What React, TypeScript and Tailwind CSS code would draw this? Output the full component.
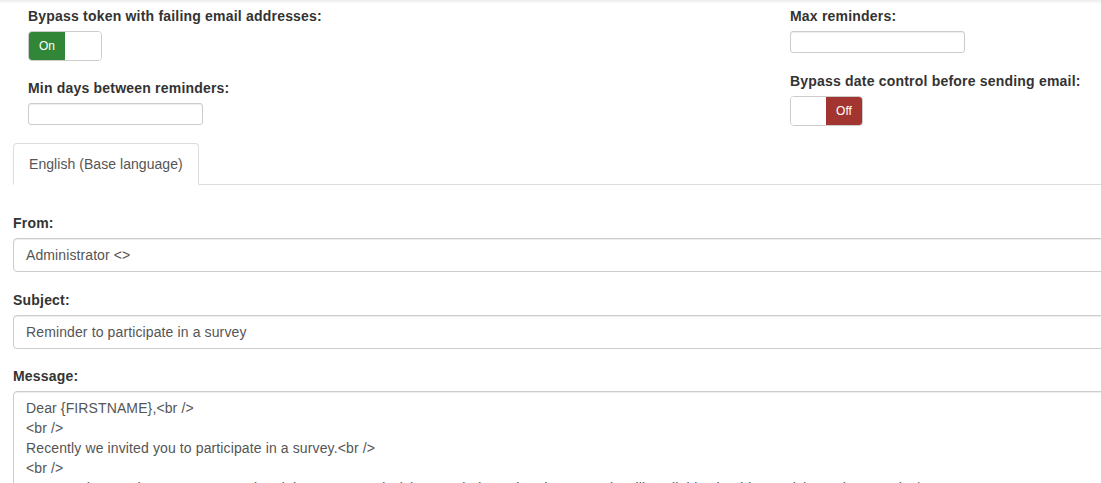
import React from "react";

function SwitchOn() {
  return (
    <div className="flex h-[30px] w-[74px] overflow-hidden rounded-[4px] border border-[#ccc] bg-white">
      <div className="flex w-[36px] items-center justify-center bg-[#328637] text-[12px] leading-[18px] text-white">
        On
      </div>
      <div className="flex-1 bg-white" />
    </div>
  );
}

function SwitchOff() {
  return (
    <div className="flex h-[30px] w-[73px] overflow-hidden rounded-[4px] border border-[#ccc] bg-white">
      <div className="flex-1 bg-white" />
      <div className="flex w-[36px] items-center justify-center bg-[#a2352f] text-[12px] leading-[18px] text-white">
        Off
      </div>
    </div>
  );
}

function SmallInput() {
  return (
    <div className="h-[22px] w-[175px] rounded-[3px] border border-[#ccc] bg-white shadow-[inset_0_1px_1px_rgba(0,0,0,0.075)]" />
  );
}

function Label({ children }: { children: React.ReactNode }) {
  return <div className="mb-[5px] font-bold tracking-[0.2px] text-[#333]">{children}</div>;
}

const messageLines = [
  "Dear {FIRSTNAME},<br />",
  "<br />",
  "Recently we invited you to participate in a survey.<br />",
  "<br />",
  "We note that you have not yet completed the survey, and wish to remind you that the survey is still available should you wish to take part.<br />",
  "<br />",
  "The survey is titled:<br />",
];

export default function App() {
  return (
    <div className="relative h-[483px] w-[1101px] overflow-hidden bg-white font-['Liberation_Sans',Arial,sans-serif] text-[14px] leading-[20px] text-[#333]">
      <div className="h-[4px] bg-linear-to-b from-[#ececec] to-white" />
      <div className="flex pt-[2px]">
        <div className="w-[790px] pl-[28px]">
          <Label>Bypass token with failing email addresses:</Label>
          <SwitchOn />
          <div className="mt-[17px]">
            <Label>Min days between reminders:</Label>
            <SmallInput />
          </div>
        </div>
        <div className="flex-1">
          <Label>Max reminders:</Label>
          <SmallInput />
          <div className="mt-[18px]">
            <Label>Bypass date control before sending email:</Label>
            <SwitchOff />
          </div>
        </div>
      </div>

      <div className="mt-[17px] ml-[13px] flex border-b border-[#ddd]">
        <div className="-mb-px rounded-t-[4px] border border-[#ddd] border-b-white bg-white px-[15px] py-[10px] tracking-[0.05px] text-[#555]">
          English (Base language)
        </div>
      </div>

      <div className="pl-[13px]">
        <div className="mt-[28px]">
          <Label>From:</Label>
          <div className="h-[34px] w-[1110px] rounded-[4px] border border-[#ccc] bg-white px-[12px] py-[6px] tracking-[0.1px] text-[#555] shadow-[inset_0_1px_1px_rgba(0,0,0,0.075)]">
            {"Administrator <>"}
          </div>
        </div>
        <div className="mt-[18px]">
          <Label>Subject:</Label>
          <div className="h-[34px] w-[1110px] rounded-[4px] border border-[#ccc] bg-white px-[12px] py-[6px] tracking-[0.12px] text-[#555] shadow-[inset_0_1px_1px_rgba(0,0,0,0.075)]">
            Reminder to participate in a survey
          </div>
        </div>
        <div className="mt-[17px]">
          <Label>Message:</Label>
          <div className="h-[200px] w-[1110px] rounded-[4px] border border-[#ccc] bg-white px-[12px] py-[6px] tracking-[0.12px] text-[#555] shadow-[inset_0_1px_1px_rgba(0,0,0,0.075)]">
            {messageLines.map((l, i) => (
              <div key={i} className="whitespace-pre">
                {l}
              </div>
            ))}
          </div>
        </div>
      </div>
    </div>
  );
}
